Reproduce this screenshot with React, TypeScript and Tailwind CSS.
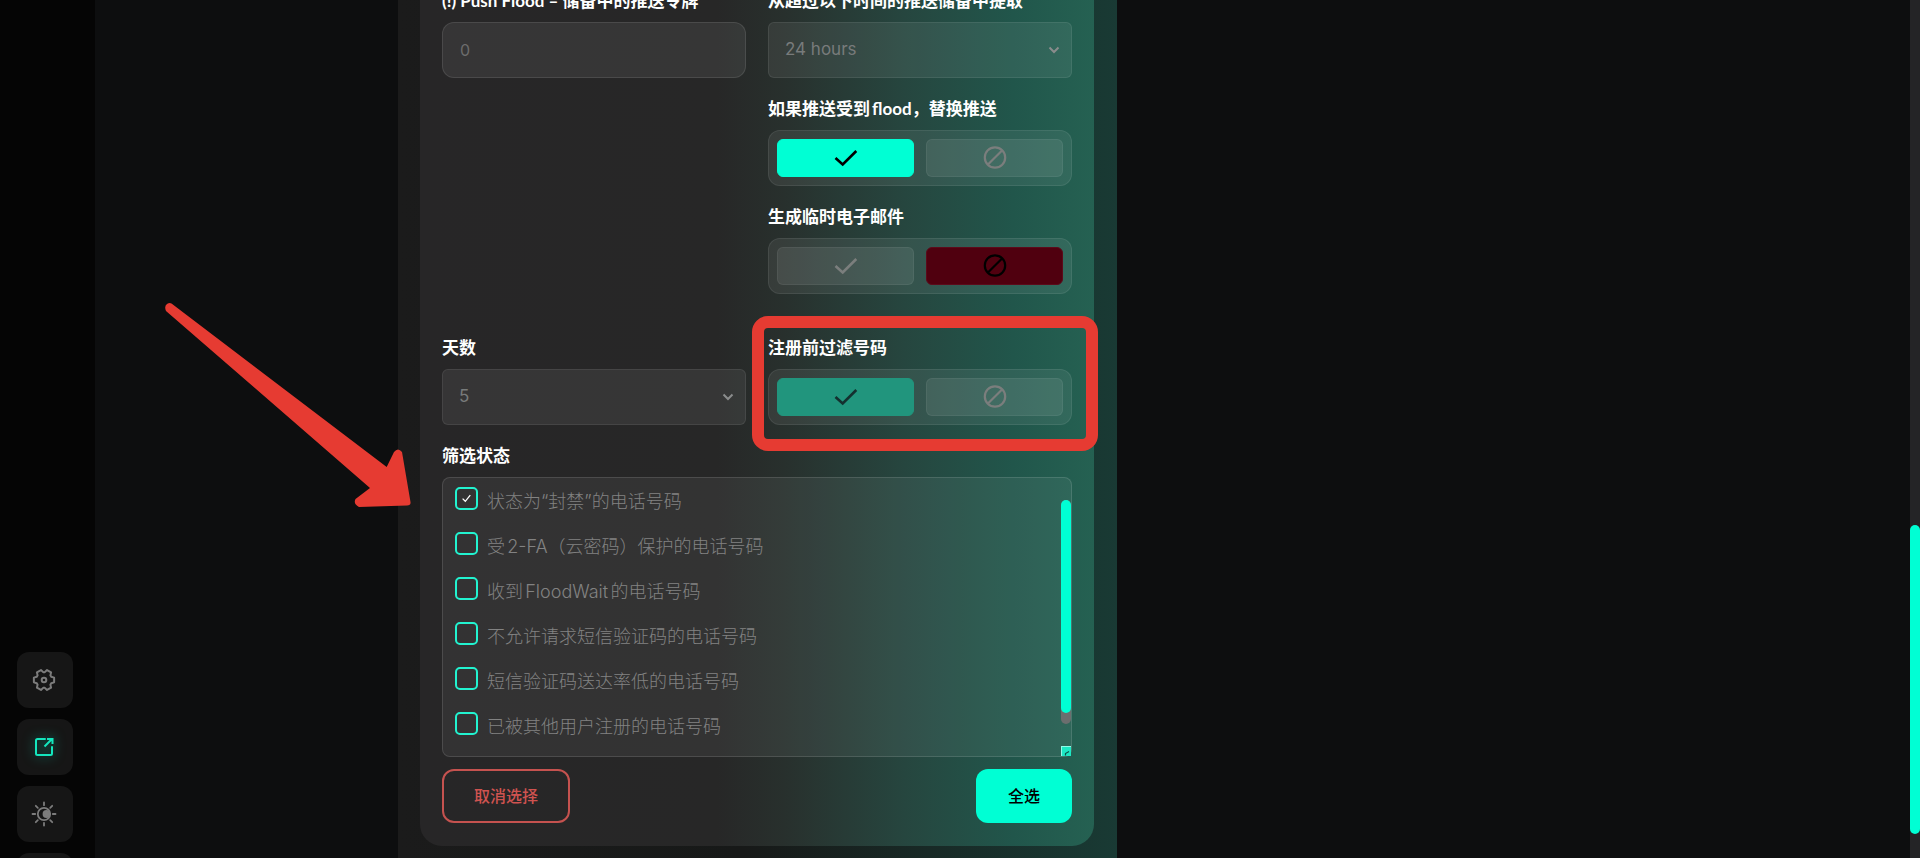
import { useState, type ReactNode } from 'react'
import clsx from 'clsx'

const FILTERS = [
  { id: 'banned', label: '状态为“封禁”的电话号码' },
  { id: 'twofa', label: '受2-FA（云密码）保护的电话号码' },
  { id: 'floodwait', label: '收到FloodWait的电话号码' },
  { id: 'nosms', label: '不允许请求短信验证码的电话号码' },
  { id: 'lowrate', label: '短信验证码送达率低的电话号码' },
  { id: 'taken', label: '已被其他用户注册的电话号码' },
]

// outline of a six-toothed gear around 12,12
const GEAR = Array.from({ length: 6 }, (_, i) =>
  [[-13, 10.4], [13, 10.4], [24, 7.9], [36, 7.9]].map(([a, r]) => {
    const rad = ((i * 60 + a) * Math.PI) / 180
    return `${(12 + r * Math.cos(rad)).toFixed(2)},${(12 + r * Math.sin(rad)).toFixed(2)}`
  }).join(' ')
).join(' ')

function GearIcon() {
  return (
    <svg width="24" height="24" viewBox="0 0 24 24" fill="none" stroke="currentColor" strokeWidth="2" strokeLinejoin="round">
      <polygon points={GEAR} />
      <circle cx="12" cy="12" r="2.3" />
    </svg>
  )
}

function ExportIcon() {
  return (
    <svg width="24" height="24" viewBox="0 0 24 24" fill="none" stroke="currentColor" strokeWidth="2" className="drop-shadow-[0_0_6px_#00ffd480]">
      <path d="M13 4H5.500Q4 4 4 5.500V18.500Q4 20 5.500 20H18.500Q20 20 20 18.500V12" strokeLinecap="round" />
      <path d="M12.500 11.500L20 4M15 4H20.500V9" />
    </svg>
  )
}

function ThemeIcon() {
  return (
    <svg width="26" height="26" viewBox="0 0 26 26" fill="none" stroke="currentColor" strokeWidth="1.800" strokeLinecap="round">
      <circle cx="13" cy="13" r="6.200" />
      <circle cx="15.500" cy="13" r="3" fill="currentColor" />
      <path d="M13 1.500V4.200M13 21.800V24.500M1.500 13H4.200M21.800 13H24.500M4.800 4.800L6.800 6.800M19.200 19.200L21.200 21.200M4.800 21.200L6.800 19.200M19.200 6.800L21.200 4.800" />
    </svg>
  )
}

function CheckIcon() {
  return (
    <svg width="24" height="24" viewBox="0 0 24 24" fill="none" stroke="currentColor" strokeWidth="2.600">
      <path d="M1.500 12L8.700 18.500L22.300 5" />
    </svg>
  )
}

function BanIcon() {
  return (
    <svg width="24" height="24" viewBox="0 0 24 24" fill="none" stroke="currentColor" strokeWidth="2.200">
      <circle cx="12" cy="11.500" r="10.200" />
      <path d="M4.700 18.800L19.300 4.200" />
    </svg>
  )
}

function NavButton({ label, active, children }: { label: string; active?: boolean; children?: ReactNode }) {
  return (
    <button
      type="button"
      aria-label={label}
      className={clsx(
        'flex size-14 shrink-0 items-center justify-center rounded-xl bg-[#161616] pr-0.5',
        active ? 'text-[#14e6bd]' : 'text-[#7c7c7c]'
      )}
    >
      {children}
    </button>
  )
}

const labelClass = 'block h-6 whitespace-nowrap text-[17px] leading-6 font-bold text-white [text-autospace:normal]'
const fieldFont = "font-['Inter','Noto_Sans_CJK_SC',sans-serif]"

function Select({ id, label, value, options }: { id: string; label: string; value: string; options: string[] }) {
  return (
    <div className="flex flex-col gap-[9px]">
      <label htmlFor={id} className={labelClass}>{label}</label>
      <div className="relative">
        <select
          id={id}
          defaultValue={value}
          className={clsx(fieldFont, 'h-14 w-full appearance-none rounded-md border border-white/8 bg-white/7 px-4 text-[17px] text-[#787b7b]')}
        >
          {options.map((o) => <option key={o}>{o}</option>)}
        </select>
        <svg className="pointer-events-none absolute top-[22px] right-3 text-[#8a8c8c]" width="12" height="12" viewBox="0 0 12 12" fill="none" stroke="currentColor" strokeWidth="2">
          <path d="M1.500 3.500L6 8L10.500 3.500" />
        </svg>
      </div>
    </div>
  )
}

type ToggleProps = {
  label: string
  initial: boolean
  dimmed?: boolean
  marked?: boolean
}

function Toggle({ label, initial, dimmed, marked }: ToggleProps) {
  const [on, setOn] = useState(initial)
  const idle = 'border-white/6 bg-white/8 text-[#7b7e7d]'

  return (
    <div className="relative flex flex-col gap-[9px]">
      <span className={labelClass}>{label}</span>
      <div role="group" aria-label={label} className="flex h-14 gap-3 rounded-xl border border-white/8 bg-white/7 px-2 py-2">
        <button
          type="button"
          aria-label="是"
          aria-pressed={on}
          onClick={() => setOn(true)}
          className={clsx(
            'flex flex-1 items-center justify-center rounded-md border',
            on ? (dimmed ? 'border-[#21957d] bg-[#21957d] text-[#14302f]' : 'border-[#00ffd4] bg-[#00ffd4] text-black') : idle
          )}
        >
          <CheckIcon />
        </button>
        <button
          type="button"
          aria-label="否"
          aria-pressed={!on}
          onClick={() => setOn(false)}
          className={clsx(
            'flex flex-1 items-center justify-center rounded-md border',
            on ? idle : 'border-[#5c0a1a] bg-[#50000f] text-black'
          )}
        >
          <BanIcon />
        </button>
      </div>
      {marked && (
        <div className="pointer-events-none absolute -top-5 -right-[26px] -bottom-[26px] -left-4 rounded-2xl border-[12px] border-[#e63b32]" />
      )}
    </div>
  )
}

export default function App() {
  const [checked, setChecked] = useState<string[]>(['banned'])

  const toggle = (id: string) =>
    setChecked((prev) => (prev.includes(id) ? prev.filter((c) => c !== id) : [...prev, id]))

  return (
    <div className="flex h-screen overflow-hidden bg-[#0d0e0f] font-['Lato','Noto_Sans_CJK_SC',sans-serif]">
      <aside className="flex w-[95px] shrink-0 flex-col justify-end bg-[#050505] pl-[17px]">
        <nav className="-mb-[51px] flex flex-col gap-[11px]">
          <NavButton label="设置"><GearIcon /></NavButton>
          <NavButton label="导出" active><ExportIcon /></NavButton>
          <NavButton label="主题"><ThemeIcon /></NavButton>
          <NavButton label="更多" />
        </nav>
      </aside>

      <main className="flex min-w-0 flex-1">
        <section className="relative ml-[303px] flex w-[719px] shrink-0 flex-col justify-end bg-[linear-gradient(90deg,#1b1b1b_0%,#171918_48%,#193a34_100%)] pr-[23px] pb-3 pl-[22px]">
          <form className="rounded-b-[22px] bg-[linear-gradient(90deg,#272627_0%,#272727_44%,#28302d_54%,#26463f_72%,#21564b_88%,#256152_100%)] px-[22px] pb-[23px]">
            <div className="grid grid-cols-2 gap-x-[22px] gap-y-[19px]">
              <div className="flex flex-col gap-[9px]">
                <label htmlFor="reserve" className={labelClass}>(!) Push Flood – 储备中的推送令牌</label>
                <input
                  id="reserve"
                  type="text"
                  placeholder="0"
                  className={clsx(fieldFont, 'h-14 w-full rounded-xl border border-white/10 bg-white/7 px-[17px] text-base text-[#787b7b] placeholder:text-[#6c6c6c]')}
                />
              </div>
              <Select id="age" label="从超过以下时间的推送储备中提取" value="24 hours" options={['12 hours', '24 hours', '48 hours']} />
              <div className="col-start-2">
                <Toggle label="如果推送受到flood，替换推送" initial />
              </div>
              <div className="col-start-2">
                <Toggle label="生成临时电子邮件" initial={false} />
              </div>
            </div>

            <div className="mt-[42px] grid grid-cols-2 gap-x-[22px]">
              <Select id="days" label="天数" value="5" options={['1', '3', '5', '7']} />
              <Toggle label="注册前过滤号码" initial dimmed marked />
            </div>

            <fieldset className="mt-[19px]">
              <legend className={labelClass}>筛选状态</legend>
              <div className="mt-[9px] flex h-[280px] justify-between rounded-lg border border-white/12 bg-white/6">
                <ul className="pt-[9px] pl-3">
                  {FILTERS.map((f) => (
                    <li key={f.id} className="flex h-[45px] items-start gap-[9px]">
                      <span className="grid">
                        <input
                          id={f.id}
                          type="checkbox"
                          checked={checked.includes(f.id)}
                          onChange={() => toggle(f.id)}
                          className="col-start-1 row-start-1 size-[23px] appearance-none rounded-[5px] border-2 border-[#22f3d0]"
                        />
                        {checked.includes(f.id) && (
                          <svg className="pointer-events-none col-start-1 row-start-1 place-self-center" width="9" height="9" viewBox="0 0 9 9" fill="none" stroke="#fff" strokeWidth="1.300">
                            <path d="M0.600 4.600L3.300 7.300L8.300 1.200" />
                          </svg>
                        )}
                      </span>
                      <label htmlFor={f.id} className={clsx(fieldFont, 'pt-[3px] text-lg leading-6 font-light whitespace-nowrap text-[#828282] [text-autospace:normal]')}>{f.label}</label>
                    </li>
                  ))}
                </ul>
                <div aria-hidden="true" className="flex w-2.5 flex-col justify-between pt-[22px]">
                  <div className="h-56 rounded-full bg-[#6b6e6e]">
                    <div className="h-[213px] rounded-full bg-[#00ffd4]" />
                  </div>
                  <svg width="10" height="10" viewBox="0 0 10 10">
                    <path d="M0 0H10V10H0Z" fill="#1ce8c4" />
                    <path d="M0 0.500H10M0.500 0V10" stroke="#8ffbe8" />
                    <path d="M4.500 9.500V7.500L8 5.500" stroke="#0c5247" strokeWidth="1.200" fill="none" />
                  </svg>
                </div>
              </div>
            </fieldset>

            <div className="mt-3 flex justify-between">
              <button type="button" onClick={() => setChecked([])} className="h-[54px] w-32 rounded-xl border-2 border-[#c5524f] text-base font-medium text-[#cf5350]">
                取消选择
              </button>
              <button type="button" onClick={() => setChecked(FILTERS.map((f) => f.id))} className="h-[54px] w-24 rounded-xl bg-[#00ffd4] text-base font-medium text-black">
                全选
              </button>
            </div>
          </form>

          {/* pointer to the filter list */}
          <svg className="pointer-events-none absolute bottom-[348px] -left-[238px]" width="254" height="210" viewBox="0 0 254 210">
            <path
              d="M11.500 3.500L226.700 167L234 152Q238 147 242 152L250.500 202Q251 205.500 247 205.500L199 207Q193 204 195.500 199L210 188L6 11Q4 6 7 4Q9.500 2.500 11.500 3.500Z"
              fill="#e63b32"
            />
          </svg>
        </section>
      </main>

      <div aria-hidden="true" className="flex w-2.5 shrink-0 flex-col justify-end bg-[#242426] pb-6">
        <div className="h-[37%] rounded-full bg-[#00ffd4]" />
      </div>
    </div>
  )
}
